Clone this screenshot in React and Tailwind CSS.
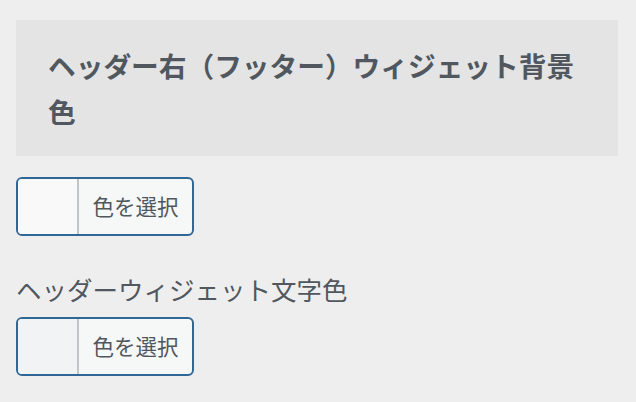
import React from 'react';

const ColorButton = ({ swatch }) => (
  <button
    type="button"
    className="flex h-[59px] w-[178px] overflow-hidden rounded-[6px] border-2 border-[#2f6797] bg-[#f6f7f7]"
  >
    <span className={`h-full w-[61px] border-r-2 border-[#c3c4c7] ${swatch}`} />
    <span className="flex h-full flex-1 items-center justify-center text-[21.5px] text-[#50575e]">
      色を選択
    </span>
  </button>
);

const App = () => {
  return (
    <div
      className="min-h-[402px] w-[636px] bg-[#eeeeee] pt-5 pl-4 pr-[18px]"
      style={{ fontFamily: '"Noto Sans CJK JP", "Noto Sans", sans-serif' }}
    >
      <h3 className="bg-[#e4e4e4] px-8 py-[22px] text-[27.7px] font-bold leading-[46px] text-[#50575e]">
        ヘッダー右（フッター）ウィジェット背景色
      </h3>

      <div className="mt-[21px]">
        <ColorButton swatch="bg-[#f9f9f9]" />
      </div>

      <div className="mt-[36px]">
        <label className="block text-[25.5px] leading-[34px] text-[#50575e]">
          ヘッダーウィジェット文字色
        </label>
        <div className="mt-[11px]">
          <ColorButton swatch="bg-[#f2f3f5]" />
        </div>
      </div>
    </div>
  );
};

export default App;
